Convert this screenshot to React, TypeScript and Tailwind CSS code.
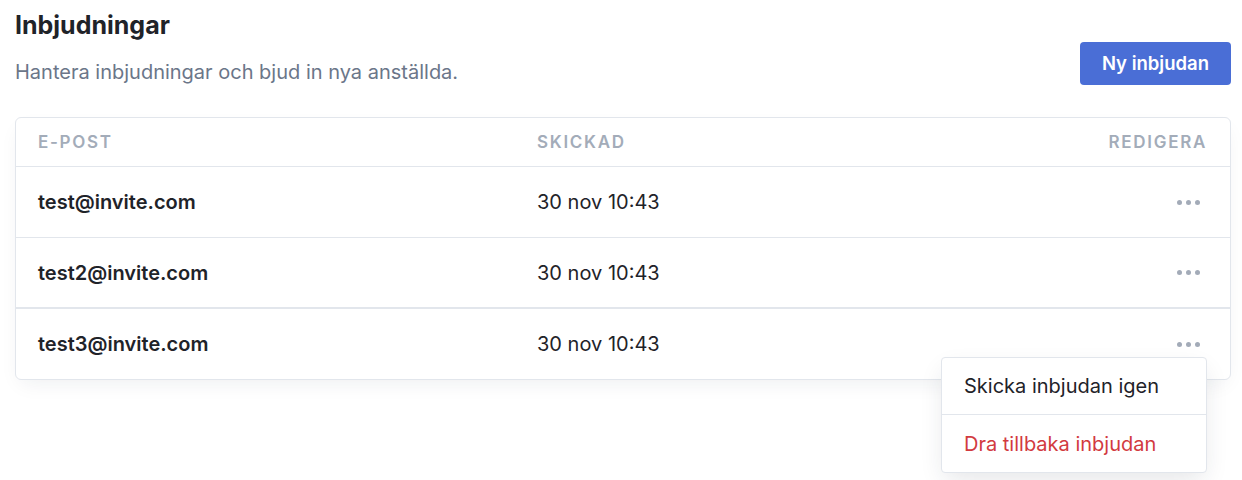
import { useState } from "react";

const INVITES = [
  { email: "test@invite.com", sent: "30 nov 10:43" },
  { email: "test2@invite.com", sent: "30 nov 10:43" },
  { email: "test3@invite.com", sent: "30 nov 10:43" },
];

function Dots() {
  return (
    <span className="flex items-center gap-[4px]">
      <span className="h-[5px] w-[5px] rounded-full bg-[#a3abb8]" />
      <span className="h-[5px] w-[5px] rounded-full bg-[#a3abb8]" />
      <span className="h-[5px] w-[5px] rounded-full bg-[#a3abb8]" />
    </span>
  );
}

export default function App() {
  const [open, setOpen] = useState<number | null>(2);

  return (
    <div className="min-h-screen bg-white pl-[15px] pr-[11px] pt-[9px] font-['Inter',sans-serif] text-[#1f2329]">
      <div className="flex items-start justify-between">
        <div>
          <h1 className="text-[25px] leading-8 font-bold">Inbjudningar</h1>
          <p className="mt-[17px] text-[20px] leading-7 text-[#6b7689]">
            Hantera inbjudningar och bjud in nya anställda.
          </p>
        </div>
        <button className="mt-[33px] h-[43px] rounded-[4px] bg-[#4a6ed6] px-[22px] text-[18.5px] font-semibold text-white">
          Ny inbjudan
        </button>
      </div>

      <div className="relative mt-[31px] rounded-[6px] border border-[#e2e6ec] bg-white shadow-[0_8px_20px_-6px_rgba(30,41,59,0.08)]">
        <div className="grid h-[49px] grid-cols-[499px_1fr_auto] items-center border-b border-[#e2e6ec] pl-[22px] pr-[23px] pt-[2px] text-[17px] font-semibold uppercase tracking-[0.1em] text-[#a3acb9]">
          <span>E-post</span>
          <span>Skickad</span>
          <span>Redigera</span>
        </div>
        {INVITES.map((inv, i) => (
          <div
            key={inv.email}
            className={`grid grid-cols-[499px_1fr_auto] items-center pl-[22px] pr-[24px] text-[20px] ${
              i === 0 ? "h-[71px] border-b border-[#e2e6ec]" : i === 1 ? "h-[71px] border-b-2 border-[#e2e6ec]" : "h-[70px]"
            }`}
          >
            <span className="font-semibold">{inv.email}</span>
            <span>{inv.sent}</span>
            <div className="relative">
              <button
                onClick={() => setOpen(open === i ? null : i)}
                className="flex h-[24px] items-center pr-[6px]"
              >
                <Dots />
              </button>
              {open === i && (
                <div className="absolute right-[-1px] top-[25px] z-10 w-[266px] rounded-[4px] border border-[#e2e6ec] bg-white shadow-[0_10px_24px_-4px_rgba(30,41,59,0.12)]">
                  <div className="flex h-[57px] items-center border-b border-[#e2e6ec] px-[22px] text-[20px] text-[#1f2329]">
                    Skicka inbjudan igen
                  </div>
                  <div className="flex h-[57px] items-center px-[22px] text-[20px] text-[#d23a3f]">
                    Dra tillbaka inbjudan
                  </div>
                </div>
              )}
            </div>
          </div>
        ))}
      </div>
    </div>
  );
}
